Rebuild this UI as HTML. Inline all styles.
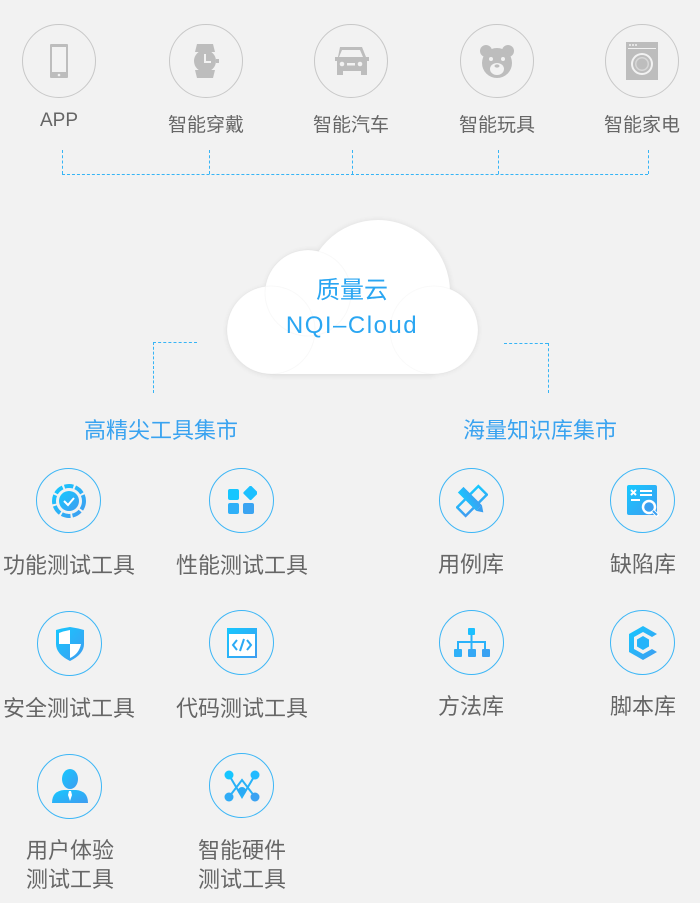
<!DOCTYPE html>
<html><head><meta charset="utf-8"><style>
html,body{margin:0;padding:0}
body{width:700px;height:903px;background:#f2f2f2;position:relative;overflow:hidden;font-family:"Liberation Sans","Noto Sans CJK SC",sans-serif}
.c{position:absolute;border-radius:50%;box-sizing:border-box}
.g{border:1px solid #c8c8c8;width:74px;height:74px}
.b{border:1.3px solid #3cb6f6;width:65px;height:65px}
.c svg{position:absolute;left:50%;top:50%;transform:translate(-50%,-50%)}
.t{position:absolute;text-align:center;white-space:nowrap;transform:translateX(-50%)}
.gl{font-size:19px;color:#666;top:110px}
.bl{font-size:22px;color:#666;line-height:29px}
.h{font-size:22px;color:#39a3f0}
.dv{position:absolute;border-left:1px dashed #36b4f5;width:0}
.dh{position:absolute;border-top:1px dashed #36b4f5;height:0}
</style></head><body>
<svg width="0" height="0" style="position:absolute"><defs><linearGradient id="bg" x1="0" y1="0" x2="1" y2="1"><stop offset="0" stop-color="#16c8ff"/><stop offset="1" stop-color="#3f9cf0"/></linearGradient></defs></svg>

<div class="c g" style="left:22px;top:24px"><svg width="20" height="36" viewBox="0 0 20 36"><rect x="1" y="1" width="18" height="34" rx="1" fill="#bdbdbd"/><rect x="3" y="4" width="14" height="25" fill="#f2f2f2"/><circle cx="10" cy="32" r="1.3" fill="#f2f2f2"/></svg></div>
<div class="c g" style="left:169px;top:24px"><svg width="28" height="38" viewBox="0 0 28 38"><path d="M5 2h16l2 8H3zM3 28h20l-2 8H5z" fill="#bdbdbd"/><circle cx="13" cy="19" r="11" fill="#bdbdbd"/><rect x="24" y="17" width="3" height="4" fill="#bdbdbd"/><path d="M13 12v8h6" stroke="#f2f2f2" stroke-width="2" fill="none"/></svg></div>
<div class="c g" style="left:314px;top:24px"><svg width="38" height="34" viewBox="0 0 38 34"><path d="M8 3h22l4 10h3v4h-2v14h-6v-4H11v4H5V17H3v-4h3z" fill="#bdbdbd"/><path d="M10 6h18l3 7H7z" fill="#f2f2f2"/><circle cx="10" cy="20" r="2.3" fill="#f2f2f2"/><circle cx="28" cy="20" r="2.3" fill="#f2f2f2"/><rect x="15" y="19" width="8" height="2.5" fill="#f2f2f2"/></svg></div>
<div class="c g" style="left:460px;top:24px"><svg width="36" height="34" viewBox="0 0 36 34"><circle cx="7" cy="7" r="6" fill="#bdbdbd"/><circle cx="29" cy="7" r="6" fill="#bdbdbd"/><ellipse cx="18" cy="19" rx="15" ry="15" fill="#bdbdbd"/><circle cx="12" cy="15" r="2" fill="#f2f2f2"/><circle cx="24" cy="15" r="2" fill="#f2f2f2"/><ellipse cx="18" cy="25" rx="7" ry="6" fill="#f2f2f2"/><ellipse cx="18" cy="22" rx="2.5" ry="1.6" fill="#bdbdbd"/></svg></div>
<div class="c g" style="left:605px;top:24px"><svg width="32" height="38" viewBox="0 0 32 38"><rect x="0" y="0" width="32" height="38" fill="#bdbdbd"/><rect x="2" y="6" width="28" height="1" fill="#f2f2f2"/><circle cx="4" cy="3" r="1" fill="#f2f2f2"/><circle cx="7" cy="3" r="1" fill="#f2f2f2"/><circle cx="10" cy="3" r="1" fill="#f2f2f2"/><circle cx="16" cy="22" r="11" fill="#f2f2f2"/><circle cx="16" cy="22" r="9" fill="#bdbdbd"/><circle cx="16" cy="22" r="7" fill="#f2f2f2" opacity=".5"/><circle cx="16" cy="22" r="5.5" fill="#bdbdbd"/></svg></div>
<div class="t gl" style="left:59px">APP</div>
<div class="t gl" style="left:206px">智能穿戴</div>
<div class="t gl" style="left:351px">智能汽车</div>
<div class="t gl" style="left:497px">智能玩具</div>
<div class="t gl" style="left:642px">智能家电</div>

<div class="dv" style="left:62px;top:150px;height:24px"></div>
<div class="dv" style="left:209px;top:150px;height:24px"></div>
<div class="dv" style="left:352px;top:150px;height:24px"></div>
<div class="dv" style="left:498px;top:150px;height:24px"></div>
<div class="dv" style="left:648px;top:150px;height:24px"></div>
<div class="dh" style="left:62px;top:174px;width:586px"></div>

<svg style="position:absolute;left:215px;top:210px" width="275" height="180" viewBox="215 210 275 180">
<defs><filter id="sh" x="-20%" y="-20%" width="140%" height="140%"><feGaussianBlur stdDeviation="3"/></filter></defs>
<g fill="#000" opacity=".08" filter="url(#sh)"><circle cx="378" cy="293" r="73"/><circle cx="310" cy="295" r="45"/><circle cx="271" cy="331" r="44"/><circle cx="434" cy="330" r="44"/><rect x="271" y="320" width="163" height="56"/></g>
<g fill="#fff"><circle cx="378" cy="292" r="72"/><circle cx="308" cy="293" r="43"/><circle cx="271" cy="330" r="44"/><circle cx="434" cy="330" r="44"/><rect x="271" y="320" width="163" height="54"/></g>
<g fill="none" stroke="#000" opacity=".025"><circle cx="308" cy="293" r="43"/><circle cx="271" cy="330" r="44"/><circle cx="434" cy="330" r="44"/></g>
</svg>
<div class="t" style="left:352px;top:270px;font-size:24px;color:#2aa6f2">质量云</div>
<div class="t" style="left:352px;top:312px;font-size:24px;color:#2aa6f2;letter-spacing:1.5px">NQI–Cloud</div>

<div class="dh" style="left:153px;top:342px;width:44px"></div>
<div class="dv" style="left:153px;top:342px;height:51px"></div>
<div class="dh" style="left:504px;top:343px;width:44px"></div>
<div class="dv" style="left:548px;top:343px;height:50px"></div>

<div class="t h" style="left:161px;top:413px">高精尖工具集市</div>
<div class="t h" style="left:540px;top:413px">海量知识库集市</div>

<div class="c b" style="left:36px;top:468px"><svg width="34" height="34" viewBox="0 0 34 34"><circle cx="17" cy="17" r="15" fill="none" stroke="url(#bg)" stroke-width="4" stroke-dasharray="9 2"/><circle cx="17" cy="17" r="10" fill="url(#bg)"/><path d="M12 17l4 4 6-7" stroke="#fff" stroke-width="2" fill="none"/></svg></div>
<div class="c b" style="left:209px;top:468px"><svg width="30" height="30" viewBox="0 0 30 30"><rect x="1" y="3" width="11" height="11" rx="2" fill="#16c6ff"/><rect x="17" y="1" width="11" height="11" rx="1.5" fill="#1cc0ff" transform="rotate(45 22.5 8)"/><rect x="1" y="17" width="11" height="11" rx="2" fill="#2fb0f8"/><rect x="16" y="17" width="11" height="11" rx="2" fill="#3aa4f2"/></svg></div>
<div class="c b" style="left:439px;top:468px"><svg width="32" height="34" viewBox="0 0 32 34"><g transform="rotate(45 16 17)"><rect x="10" y="2" width="12" height="30" fill="none" stroke="url(#bg)" stroke-width="2.5"/></g><g transform="rotate(-45 16 17)"><rect x="12" y="1" width="8" height="26" fill="url(#bg)"/><path d="M12 27h8l-4 6z" fill="#3a9ff0"/></g></svg></div>
<div class="c b" style="left:610px;top:468px"><svg width="32" height="32" viewBox="0 0 32 32"><rect x="0" y="0" width="30" height="30" rx="2" fill="url(#bg)"/><path d="M4 5l5 5M9 5l-5 5M13 6h12M13 10h12M4 15h9" stroke="#fff" stroke-width="2"/><circle cx="22" cy="22" r="6" fill="#3a9ff0" stroke="#fff" stroke-width="2.5"/><path d="M26 26l5 5" stroke="#fff" stroke-width="4"/><path d="M26 26l4 4" stroke="#3a9ff0" stroke-width="2"/></svg></div>
<div class="t bl" style="left:69px;top:551px">功能测试工具</div>
<div class="t bl" style="left:242px;top:551px">性能测试工具</div>
<div class="t bl" style="left:471px;top:550px">用例库</div>
<div class="t bl" style="left:643px;top:550px">缺陷库</div>

<div class="c b" style="left:37px;top:611px"><svg width="30" height="34" viewBox="0 0 30 34"><path d="M1 3q7-2 14-3q7 1 14 3v14q0 10-14 17Q1 27 1 17z" fill="url(#bg)"/><path d="M15 3v14H4V6q5-2 11-3zM15 17h11q-2 10-11 14z" fill="#fff"/></svg></div>
<div class="c b" style="left:209px;top:610px"><svg width="30" height="30" viewBox="0 0 30 30"><rect x="0" y="0" width="30" height="30" fill="url(#bg)"/><rect x="2" y="6" width="26" height="22" fill="#fff"/><path d="M10 12l-4 5 4 5M20 12l4 5-4 5M17 11l-4 12" stroke="#2aaaf5" stroke-width="2" fill="none"/></svg></div>
<div class="c b" style="left:439px;top:610px"><svg width="36" height="30" viewBox="0 0 36 30"><rect x="14" y="0" width="7" height="7" rx="1" fill="#1cc0ff"/><path d="M17.5 7v15M4 22v-8h27v8" stroke="#2ab2fa" stroke-width="2" fill="none"/><rect x="0" y="21" width="8" height="8" rx="1" fill="#2fb0f8"/><rect x="14" y="21" width="8" height="8" rx="1" fill="#35a8f5"/><rect x="28" y="21" width="8" height="8" rx="1" fill="#3aa2f2"/></svg></div>
<div class="c b" style="left:610px;top:610px"><svg width="32" height="36" viewBox="0 0 32 36"><path d="M16 1l14 8-5 3-9-5-9 5v12l9 5 9-5 5 3-14 8L2 27V9z" fill="url(#bg)"/><path d="M16 11l6 3.5v7L16 25l-6-3.5v-7z" fill="#25b4fa"/></svg></div>
<div class="t bl" style="left:69px;top:694px">安全测试工具</div>
<div class="t bl" style="left:242px;top:694px">代码测试工具</div>
<div class="t bl" style="left:471px;top:692px">方法库</div>
<div class="t bl" style="left:643px;top:692px">脚本库</div>

<div class="c b" style="left:37px;top:754px"><svg width="36" height="36" viewBox="0 0 36 36"><ellipse cx="18" cy="10" rx="8" ry="10" fill="url(#bg)"/><path d="M0 34q0-12 12-13h12q12 1 12 13z" fill="url(#bg)"/><path d="M17 22h2l1 4-2 6-2-6z" fill="#fff"/></svg></div>
<div class="c b" style="left:209px;top:753px"><svg width="36" height="32" viewBox="0 0 36 32"><path d="M5 5l13 22 13-22M5 27L18 10l13 17" stroke="#27b2f8" stroke-width="2" fill="none"/><circle cx="5" cy="5" r="4.5" fill="#16c6ff"/><circle cx="31" cy="5" r="4.5" fill="#22baff"/><circle cx="5" cy="27" r="4.5" fill="#30acf6"/><circle cx="31" cy="27" r="4.5" fill="#3aa2f2"/><circle cx="18" cy="21" r="4" fill="#2aaaf5"/></svg></div>
<div class="t bl" style="left:70px;top:836px">用户体验<br>测试工具</div>
<div class="t bl" style="left:242px;top:836px">智能硬件<br>测试工具</div>
</body></html>
